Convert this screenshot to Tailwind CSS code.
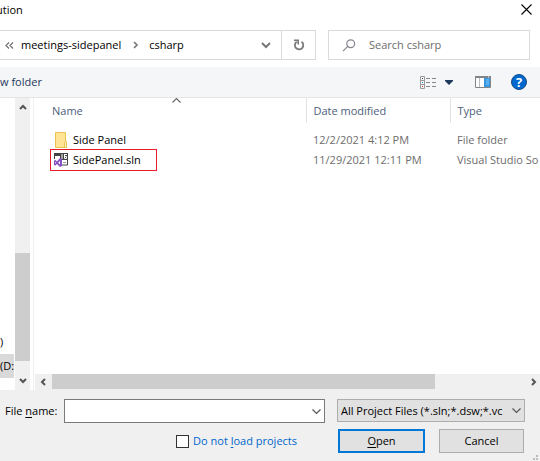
<!DOCTYPE html>
<html lang="en">
<head>
<meta charset="utf-8">
<meta name="viewport" content="width=device-width, initial-scale=1">
<title>Open Project/Solution</title>
<script src="https://cdn.jsdelivr.net/npm/@tailwindcss/browser@4"></script>
</head>
<body class="flex min-h-screen flex-col overflow-hidden bg-white font-['Segoe_UI','Open_Sans',sans-serif] text-[11px] leading-4 text-black">

<header class="flex h-[30px] items-start justify-between pr-2">
  <h1 class="-ml-1 pt-0.5">ution</h1>
  <button type="button" aria-label="Close" class="mt-1">
    <svg class="size-[11px]" viewBox="0 0 11 11" fill="none" stroke="#000" stroke-width="1.1"><path d="M.5.5l10 10M10.5.5l-10 10"/></svg>
  </button>
</header>

<div class="flex h-[30px] gap-3 pr-[10px]">
  <nav aria-label="Address" class="flex min-w-0 flex-1 border-y border-r border-[#d9d9d9]">
    <div class="flex min-w-0 flex-1 items-center">
      <button type="button" aria-label="Earlier folders" class="ml-[5px] flex w-4">
        <svg class="h-[7px] w-[9px]" viewBox="0 0 9 7" fill="none" stroke="#707070" stroke-width="1.2"><path d="M4 .5l-3 3 3 3M8 .5l-3 3 3 3"/></svg>
      </button>
      <a href="#">meetings-sidepanel</a>
      <svg class="ml-3 mr-[10px] h-[8px] w-[6px] shrink-0" viewBox="0 0 6 8" fill="none" stroke="#777" stroke-width="1.7"><path d="M1 1l3 3-3 3"/></svg>
      <a href="#">csharp</a>
      <button type="button" aria-label="Previous locations" class="ml-auto mr-[10px]">
        <svg class="h-[7px] w-[10px]" viewBox="0 0 10 7" fill="none" stroke="#777" stroke-width="2"><path d="M1 1l4 4 4-4"/></svg>
      </button>
    </div>
    <button type="button" aria-label="Refresh" class="flex w-[34px] items-center justify-center border-l border-[#d9d9d9]">
      <svg class="size-[12px]" viewBox="0 0 12 12" fill="none" stroke="#7a7a7a" stroke-width="1.8"><path d="M8.6 2.8a4.2 4.2 0 1 1-4.9-.1"/><path d="M1 1.3h4.2v4.2" stroke-width="1.6"/></svg>
    </button>
  </nav>
  <label class="flex w-[202px] min-w-0 items-center border border-[#d9d9d9] pl-[13px]">
    <svg class="h-[13px] w-[14px] shrink-0" viewBox="0 0 14 13" fill="none" stroke="#85858f" stroke-width="1.2"><circle cx="8.7" cy="4.7" r="3.9"/><path d="M5.8 7.4L1 12.2"/></svg>
    <input type="search" aria-label="Search csharp" placeholder="Search csharp" class="ml-[13px] min-w-0 flex-1 outline-none placeholder:text-[#6d6d6d]">
  </label>
</div>

<div class="mt-[7px] flex h-[31px] items-center border-b border-[#e5e5e5] bg-[#f4f6f8] pr-[13px]">
  <button type="button" class="text-[#1e395b]">w folder</button>
  <button type="button" aria-label="Change your view" class="ml-auto flex items-center">
    <svg class="h-[13px] w-4" viewBox="0 0 16 13" fill="none"><path d="M.5.5h4v12h-4zM.5 4.5h4M.5 8.5h4" stroke="#999"/><path d="M2 2h1v1H2z" fill="#444"/><path d="M2 6h1v1H2z" fill="#267ed9"/><path d="M2 10h1v1H2z" fill="#d22"/><path d="M6 2.5h4m2 0h4M6 6.5h4m2 0h4M6 10.5h4m2 0h4" stroke="#888"/></svg>
    <svg class="ml-[9px] h-[5px] w-[8px]" viewBox="0 0 8 5"><path d="M0 0h8v1L4 5 0 1z" fill="#1e395b"/></svg>
  </button>
  <button type="button" aria-label="Preview pane" class="ml-[22px]">
    <svg class="h-[12px] w-4" viewBox="0 0 16 12"><path d="M.5.5h15v11H.5z" fill="#fff" stroke="#818589"/><path d="M0 0h16v2H0z" fill="#818589"/><path d="M13 .5h1v1h-1z" fill="#fff"/><path d="M4 2h1v9H4z" fill="#bbb"/><path d="M9 2h6v9H9z" fill="#3a96dd"/><path d="M11 3h3v6h-3z" fill="#57b0f2"/></svg>
  </button>
  <button type="button" aria-label="Help" class="ml-5 flex size-4 items-center justify-center rounded-full border border-[#174d85] bg-[#0068cf] text-[13px] font-bold leading-4 text-white">?</button>
</div>

<main class="flex min-h-[292px] flex-1">
  <aside aria-label="Folders" class="flex w-[14px] shrink-0 flex-col justify-end overflow-hidden pb-3 whitespace-nowrap">
    <a href="#" class="flex h-6 items-center">)</a>
    <a href="#" class="flex h-6 items-center bg-[#d9d9d9]">(D:)</a>
  </aside>
  <div class="ml-px flex w-[15px] shrink-0 flex-col items-center bg-[#f0f0f0]">
    <svg class="my-[6px] h-[6px] w-[8px] shrink-0" viewBox="0 0 8 6" fill="none" stroke="#555" stroke-width="2"><path d="M1 5l3-3 3 3"/></svg>
    <div class="min-h-0 w-full flex-[137]"></div>
    <div class="min-h-0 w-full flex-[108] bg-[#cdcdcd]"></div>
    <svg class="mt-[17px] mb-[6px] h-[6px] w-[8px] shrink-0" viewBox="0 0 8 6" fill="none" stroke="#555" stroke-width="2"><path d="M1 1l3 3 3-3"/></svg>
  </div>
  <section aria-label="Files" class="ml-[3px] flex min-w-0 flex-1 flex-col border-l border-[#f0f0f0] pl-px">
    <div class="flex-1 overflow-hidden">
      <table class="w-full table-fixed border-collapse whitespace-nowrap text-left">
        <thead class="text-[#4c607a]">
          <tr class="h-[25px]">
            <th class="relative w-[271px] pl-[17px] font-normal">Name
              <svg class="absolute left-[137px] top-0 h-[5px] w-[9px]" viewBox="0 0 9 5" fill="none" stroke="#666" stroke-width="1.1"><path d="M.5 4.5l4-4 4 4"/></svg>
            </th>
            <th class="w-[144px] border-l border-[#e2e2e2] pl-[7px] font-normal">Date modified</th>
            <th class="border-l border-[#e2e2e2] pl-[7px] font-normal">Type</th>
          </tr>
        </thead>
        <tbody class="text-[#6d6d6d]">
          <tr class="h-[26px]">
            <td class="pt-2 pl-[15px]">
              <a href="#" class="flex items-center gap-[5px] pl-1 text-black">
                <svg class="h-4 w-[14px]" viewBox="0 0 14 16"><path d="M1.500.5h10V9.500h1v6h-11z" fill="#ffe495" stroke="#e9c452"/><path d="M10.500 15.500v-5l1-1h1v6z" fill="#fff0bd" stroke="#e9c452"/></svg>
                Side Panel
              </a>
            </td>
            <td class="pt-2 pl-[7px]">12/2/2021 4:12 PM</td>
            <td class="pt-2 pl-[7px]">File folder</td>
          </tr>
          <tr class="h-[22px]">
            <td class="pl-[15px]">
              <a href="#" class="flex h-[22px] w-[107px] items-center gap-[5px] border border-[#e81c2a] pl-[3px] text-black">
                <svg class="h-[14px] w-[14px]" viewBox="0 0 14 14"><path d="M.5 6V.5h13v11.500H8" fill="#fff" stroke="#444"/><path d="M0 0h6v3H0zM6 0h8v7H6z" fill="#444"/><path d="M8 1v5M10.500 1v4.500h2v-2h-2M10 1.500h3" fill="none" stroke="#fff"/><path d="M9 9.500h3" stroke="#999"/><path d="M6 5l2 1v7l-2 1-3-3-1.500 1.500L0 12V7.500L1.500 7 3 8.500z" fill="#8750c4"/><path d="M6 8v3.500L4.200 9.700zM1 8.800l1 1-1 1z" fill="#fff"/></svg>
                SidePanel.sln
              </a>
            </td>
            <td class="pl-[7px]">11/29/2021 12:11 PM</td>
            <td class="pl-[7px]">Visual Studio So</td>
          </tr>
        </tbody>
      </table>
    </div>
    <div class="flex h-4 items-center bg-[#f0f0f0]">
      <svg class="mx-[5px] h-[8px] w-[6px] shrink-0" viewBox="0 0 6 8" fill="none" stroke="#555" stroke-width="2"><path d="M5 1L2 4l3 3"/></svg>
      <div class="ml-px h-full min-w-0 flex-[383] border-b border-[#f0f0f0] bg-[#cdcdcd]"></div>
      <div class="min-w-0 flex-[96]"></div>
      <svg class="mr-[3px] h-[8px] w-[6px] shrink-0" viewBox="0 0 6 8" fill="none" stroke="#555" stroke-width="2"><path d="M1 1l3 3-3 3"/></svg>
    </div>
  </section>
</main>

<form class="relative grid grid-cols-[1fr_188px] gap-x-3 gap-y-[6px] bg-[#f0f0f0] pt-[9px] pr-[15px] pb-2 pl-[5px]">
  <div class="flex h-6 items-center">
    <label for="file-name" class="w-[59px] shrink-0 whitespace-nowrap">File <u class="underline-offset-2">n</u>ame:</label>
    <div class="relative h-full min-w-0 flex-1">
      <input id="file-name" type="text" class="size-full border border-[#7a7a7a] bg-white pl-1 pr-5 outline-none">
      <svg class="pointer-events-none absolute right-1 top-[10px] h-[6px] w-[9px]" viewBox="0 0 9 6" fill="none" stroke="#555" stroke-width="1.200"><path d="M.5.500l4 4 4-4"/></svg>
    </div>
  </div>
  <div class="relative h-6">
    <select aria-label="File type" class="h-[23px] w-full appearance-none border border-[#adadad] bg-[#e1e1e1] pl-[3px] pr-[18px] outline-none">
      <option>All Project Files (*.sln;*.dsw;*.vc</option>
    </select>
    <svg class="pointer-events-none absolute right-1 top-[9px] h-[6px] w-[9px]" viewBox="0 0 9 6" fill="none" stroke="#555" stroke-width="1.200"><path d="M.5.500l4 4 4-4"/></svg>
  </div>
  <label class="flex h-6 items-center justify-end gap-1 pr-7 text-[#0066cc]">
    <input type="checkbox" class="size-[13px] appearance-none border border-[#333] bg-white checked:bg-[#0078d7]">
    <span>Do not <u class="underline-offset-2">l</u>oad projects</span>
  </label>
  <div class="flex h-6 gap-[14px] pl-px pr-px">
    <button type="submit" class="flex-1 border-2 border-[#0078d7] bg-[#e1e1e1]"><u class="underline-offset-2">O</u>pen</button>
    <button type="button" class="flex-1 border border-[#adadad] bg-[#e1e1e1]">Cancel</button>
  </div>
  <svg class="absolute right-px bottom-0 size-[6px]" viewBox="0 0 6 6" fill="#bdbdbd"><path d="M3 0h2v2H3zM0 3h2v2H0zM3 3h2v2H3z"/></svg>
</form>

</body>
</html>
